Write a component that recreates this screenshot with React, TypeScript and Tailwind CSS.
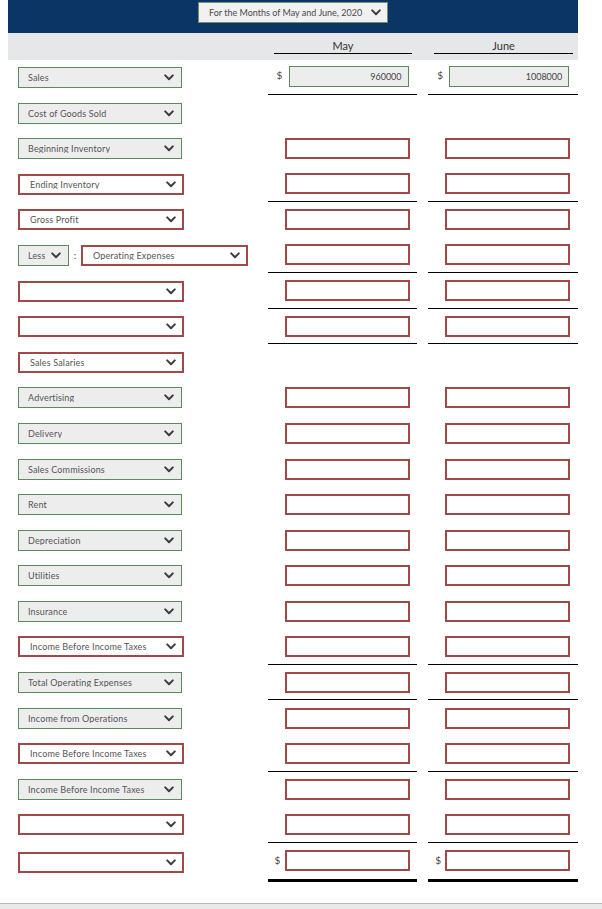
import React from 'react';

type Tone = 'green' | 'red';
type Cell = 'none' | 'red' | 'green';

interface RowDef {
  label: string;
  tone: Tone;
  cell: Cell;
  line?: 'thin' | 'thick';
  dollar?: boolean;
  values?: [string, string];
}

const Chevron = ({ className = '' }: { className?: string }) => (
  <svg width="10" height="7" viewBox="0 0 10 7" className={className}>
    <polyline points="1.2,1.4 5,5.2 8.8,1.4" fill="none" stroke="#3d3d3d" strokeWidth="2" strokeLinecap="round" strokeLinejoin="round" />
  </svg>
);

function Select({ label, tone, width }: { label: string; tone: Tone; width?: string }) {
  const base = tone === 'green'
    ? 'border border-[#5b8a5b] bg-[#ededed] pl-[9px] pr-[7px]'
    : 'border-2 border-[#a34848] bg-white pl-[10px] pr-[6px]';
  const w = width ?? (tone === 'green' ? 'w-[164px]' : 'w-[166px]');
  return (
    <div className={`${base} ${w} h-[21px] flex items-center justify-between shrink-0`}>
      <span className="text-[9px] text-[#555] tracking-[0.15px] leading-none truncate">{label}</span>
      <Chevron />
    </div>
  );
}

const rows: RowDef[] = [
  { label: 'Sales', tone: 'green', cell: 'green', line: 'thin', dollar: true, values: ['960000', '1008000'] },
  { label: 'Cost of Goods Sold', tone: 'green', cell: 'none' },
  { label: 'Beginning Inventory', tone: 'green', cell: 'red' },
  { label: 'Ending Inventory', tone: 'red', cell: 'red', line: 'thin' },
  { label: 'Gross Profit', tone: 'red', cell: 'red' },
  { label: '__less__', tone: 'red', cell: 'red', line: 'thin' },
  { label: '', tone: 'red', cell: 'red', line: 'thin' },
  { label: '', tone: 'red', cell: 'red', line: 'thin' },
  { label: 'Sales Salaries', tone: 'red', cell: 'none' },
  { label: 'Advertising', tone: 'green', cell: 'red' },
  { label: 'Delivery', tone: 'green', cell: 'red' },
  { label: 'Sales Commissions', tone: 'green', cell: 'red' },
  { label: 'Rent', tone: 'green', cell: 'red' },
  { label: 'Depreciation', tone: 'green', cell: 'red' },
  { label: 'Utilities', tone: 'green', cell: 'red' },
  { label: 'Insurance', tone: 'green', cell: 'red' },
  { label: 'Income Before Income Taxes', tone: 'red', cell: 'red', line: 'thin' },
  { label: 'Total Operating Expenses', tone: 'green', cell: 'red', line: 'thin' },
  { label: 'Income from Operations', tone: 'green', cell: 'red' },
  { label: 'Income Before Income Taxes', tone: 'red', cell: 'red', line: 'thin' },
  { label: 'Income Before Income Taxes', tone: 'green', cell: 'red' },
  { label: '', tone: 'red', cell: 'red', line: 'thin' },
  { label: '', tone: 'red', cell: 'red', line: 'thick', dollar: true },
];

function AmountCell({ row, idx }: { row: RowDef; idx: number }) {
  const border = row.line === 'thick'
    ? 'border-b-[3px] border-black'
    : row.line === 'thin'
      ? 'border-b border-black'
      : '';
  return (
    <div className={`w-[150px] h-full flex items-center ${border}`}>
      {row.cell === 'green' && (
        <>
          <span className="w-[21px] pl-[9px] self-start pt-[8px] text-[10px] text-[#444]">$</span>
          <div className="w-[120px] h-[21px] border border-[#5b8a5b] bg-[#ededed] flex items-center justify-end pr-[6px] text-[9px] text-[#444]">
            {row.values?.[idx]}
          </div>
        </>
      )}
      {row.cell === 'red' && (
        <>
          <span className="w-[17px] pl-[7px] text-[10px] text-[#444]">{row.dollar ? '$' : ''}</span>
          <div className="w-[125px] h-[21px] border-2 border-[#a34848] bg-white" />
        </>
      )}
    </div>
  );
}

export default function App() {
  return (
    <div className="w-[602px] h-[909px] bg-white flex flex-col font-['Lato','Liberation_Sans',sans-serif] overflow-hidden">
      <div className="ml-[8px] w-[570px]">
        <div className="h-[33px] bg-[#0a3565] flex items-center justify-center">
          <div className="w-[190px] h-[21px] mb-[8px] bg-[#f1f1f1] border border-[#6f8f6f] flex items-center justify-between pl-[10px] pr-[6px]">
            <span className="text-[9px] text-[#4a4a4a] leading-none">For the Months of May and June, 2020</span>
            <Chevron />
          </div>
        </div>
        <div className="h-[26.7px] bg-[#e6e7e8] flex">
          <div className="w-[260px]" />
          <div className="w-[150px] pl-[6px] pr-[5px]">
            <div className="h-[21px] border-b border-black flex items-end justify-center text-[11px] leading-[14px] text-[#333]">May</div>
          </div>
          <div className="w-[11px]" />
          <div className="w-[150px] pl-[6px] pr-[5px]">
            <div className="h-[21px] border-b border-black flex items-end justify-center text-[11px] leading-[14px] text-[#333]">June</div>
          </div>
        </div>
        {rows.map((row, i) => (
          <div key={i} className={`flex ${row.line === 'thick' ? 'h-[39px]' : 'h-[35.6px]'}`}>
            <div className="w-[260px] h-full flex items-center pl-[10px] self-start">
              <div className="h-[35.6px] flex items-center">
                {row.label === '__less__' ? (
                  <div className="flex items-center">
                    <Select label="Less" tone="green" width="w-[51px]" />
                    <span className="w-[12px] text-center text-[10px] text-[#444] leading-none">:</span>
                    <Select label="Operating Expenses" tone="red" width="w-[167px]" />
                  </div>
                ) : (
                  <Select label={row.label} tone={row.tone} />
                )}
              </div>
            </div>
            <AmountCell row={row} idx={0} />
            <div className="w-[11px]" />
            <AmountCell row={row} idx={1} />
          </div>
        ))}
      </div>
      <div className="mt-auto h-[6px] border-t border-[#b9b9b9] bg-[#e9e9e9]" />
    </div>
  );
}
